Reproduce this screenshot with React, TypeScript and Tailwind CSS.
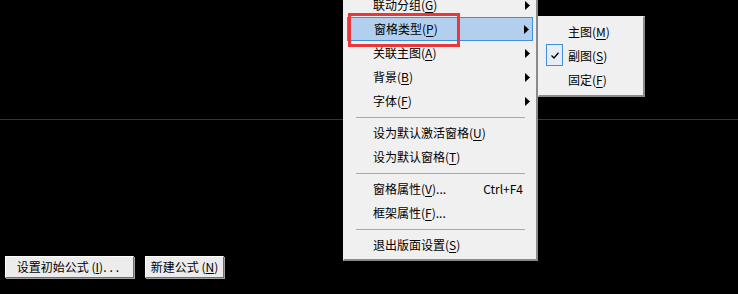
import React from "react";

type Item =
    | { kind: "item"; label: string; key: string; tail?: string; arrow?: boolean; active?: boolean }
    | { kind: "sep" };

const mainItems: Item[] = [
    { kind: "item", label: "联动分组", key: "G", arrow: true },
    { kind: "item", label: "窗格类型", key: "P", arrow: true, active: true },
    { kind: "item", label: "关联主图", key: "A", arrow: true },
    { kind: "item", label: "背景", key: "B", arrow: true },
    { kind: "item", label: "字体", key: "F", arrow: true },
    { kind: "sep" },
    { kind: "item", label: "设为默认激活窗格", key: "U" },
    { kind: "item", label: "设为默认窗格", key: "T" },
    { kind: "sep" },
    { kind: "item", label: "窗格属性", key: "V", tail: "...", },
    { kind: "item", label: "框架属性", key: "F", tail: "..." },
    { kind: "sep" },
    { kind: "item", label: "退出版面设置", key: "S" },
];

const subItems = [
    { label: "主图", key: "M", checked: false },
    { label: "副图", key: "S", checked: true },
    { label: "固定", key: "F", checked: false },
];

const font = { fontFamily: '"Noto Sans CJK SC", "Noto Sans", sans-serif' };

// triangle used for items that open a submenu
const Arrow = () => (
    <svg width="5" height="9" viewBox="0 0 5 9" className="shrink-0">
        <path d="M0 0 L5 4.5 L0 9 Z" fill="#000" />
    </svg>
);

const Label = ({ label, k, tail }: { label: string; k: string; tail?: string }) => (
    <span className="whitespace-nowrap">
        {label}(<span className="underline underline-offset-2">{k}</span>){tail}
    </span>
);

const App: React.FC = () => {
    return (
        <div className="relative w-[738px] h-[294px] bg-black overflow-hidden" style={font}>
            {/* divider line of the chart area */}
            <div className="mt-[119px] h-px w-full bg-[#8e1414]" />

            {/* buttons at the bottom */}
            <div className="mt-[136px] flex gap-[11px] pl-[5px]">
                <button className="h-[22px] w-[129px] bg-[#ececec] text-[12px] text-black leading-none border border-t-white border-l-white border-r-[#6d6d6d] border-b-[#6d6d6d] shadow-[1px_1px_0_#a0a0a0]">
                    设置初始公式 (<span className="underline">I</span>)<span className="tracking-[3px]">...</span>
                </button>
                <button className="h-[22px] w-[79px] bg-[#ececec] text-[12px] text-black leading-none border border-t-white border-l-white border-r-[#6d6d6d] border-b-[#6d6d6d] shadow-[1px_1px_0_#a0a0a0]">
                    新建公式 (<span className="underline">N</span>)
                </button>
            </div>

            {/* context menu */}
            <div className="absolute left-[343px] top-[-10px] w-[195px] bg-[#f0f0f0] border-l border-t border-[#f0f0f0] border-r-2 border-b-2 border-r-[#8a8a8a] border-b-[#8a8a8a] px-[3px] py-[2px] text-[12px] text-black">
                {mainItems.map((it, i) =>
                    it.kind === "sep" ? (
                        <div key={i} className="h-[8px] flex items-center pl-[9px] pr-[8px]">
                            <div className="h-px w-full bg-[#a8a8a8]" />
                        </div>
                    ) : (
                        <div
                            key={i}
                            className={`h-[24px] flex items-center pl-[26px] pr-[3px] ${it.active ? "bg-[#b3cfee] border border-[#3f8ee0] pl-[25px] pr-[2px]" : ""}`}
                        >
                            <Label label={it.label} k={it.key} tail={it.tail} />
                            <div className="flex-1" />
                            {it.label === "窗格属性" && <span className="pr-[7px]">Ctrl+F4</span>}
                            {it.arrow && <Arrow />}
                        </div>
                    )
                )}
            </div>

            {/* submenu */}
            <div className="absolute left-[538px] top-[16px] w-[107px] bg-[#f0f0f0] border-l border-t border-[#f0f0f0] border-r-2 border-b-2 border-r-[#8a8a8a] border-b-[#8a8a8a] p-[3px] text-[12px] text-black">
                {subItems.map((s) => (
                    <div key={s.label} className="relative h-[24px] flex items-center pl-[26px]">
                        {s.checked && (
                            <div className="absolute left-[4px] top-0 w-[17px] h-[22px] border border-[#3f8ee0] bg-[#e6eef8] flex items-center justify-center">
                                <svg width="8" height="7" viewBox="0 0 8 7">
                                    <path d="M0.5 3.5 L3 6 L7.5 0.8" stroke="#000" strokeWidth="1.3" fill="none" />
                                </svg>
                            </div>
                        )}
                        <Label label={s.label} k={s.key} />
                    </div>
                ))}
            </div>

            {/* red annotation box */}
            <div className="absolute left-[348px] top-[13px] w-[112px] h-[34px] border-[3px] border-[#e8383c]" />
        </div>
    );
};

export default App;
